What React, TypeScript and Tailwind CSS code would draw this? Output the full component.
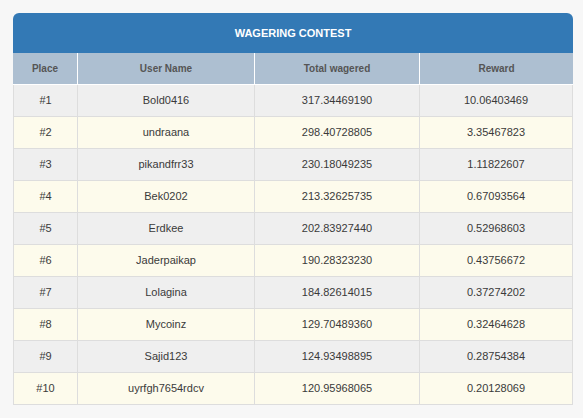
import React from "react";

const rows = [
  ["#1", "Bold0416", "317.34469190", "10.06403469"],
  ["#2", "undraana", "298.40728805", "3.35467823"],
  ["#3", "pikandfrr33", "230.18049235", "1.11822607"],
  ["#4", "Bek0202", "213.32625735", "0.67093564"],
  ["#5", "Erdkee", "202.83927440", "0.52968603"],
  ["#6", "Jaderpaikap", "190.28323230", "0.43756672"],
  ["#7", "Lolagina", "184.82614015", "0.37274202"],
  ["#8", "Mycoinz", "129.70489360", "0.32464628"],
  ["#9", "Sajid123", "124.93498895", "0.28754384"],
  ["#10", "uyrfgh7654rdcv", "120.95968065", "0.20128069"],
];

export default function App() {
  return (
    <div
      className="min-h-screen w-full bg-[#f7f7f7] pt-[13px] pl-[13px]"
      style={{ fontFamily: '"Liberation Sans", Arial, sans-serif' }}
    >
      <div className="w-[560px]">
        <div className="h-[40px] rounded-t-[6px] bg-[#3379b5] flex items-center justify-center text-white font-bold text-[11px]">
          WAGERING CONTEST
        </div>
        <div className="flex h-[32px] bg-[#adbfd1] border-b border-white text-[10px] font-bold text-[#555]">
          <div className="w-[65px] flex items-center justify-center border-r border-white">Place</div>
          <div className="w-[177px] flex items-center justify-center border-r border-white">User Name</div>
          <div className="w-[165px] flex items-center justify-center border-r border-white">Total wagered</div>
          <div className="w-[153px] flex items-center justify-center">Reward</div>
        </div>
        <div className="border-l border-[#dddddd]">
          {rows.map((r, i) => (
            <div
              key={i}
              className={
                "flex h-[32px] border-b border-[#dddddd] text-[11px] text-[#3a3a3a] " +
                (i % 2 === 0 ? "bg-[#efefef]" : "bg-[#fdfbec]")
              }
            >
              <div className="w-[64px] flex items-center justify-center border-r border-[#dddddd]">{r[0]}</div>
              <div className="w-[177px] flex items-center justify-center border-r border-[#dddddd]">{r[1]}</div>
              <div className="w-[165px] flex items-center justify-center border-r border-[#dddddd]">{r[2]}</div>
              <div className="w-[153px] flex items-center justify-center border-r border-[#dddddd]">{r[3]}</div>
            </div>
          ))}
        </div>
      </div>
    </div>
  );
}
